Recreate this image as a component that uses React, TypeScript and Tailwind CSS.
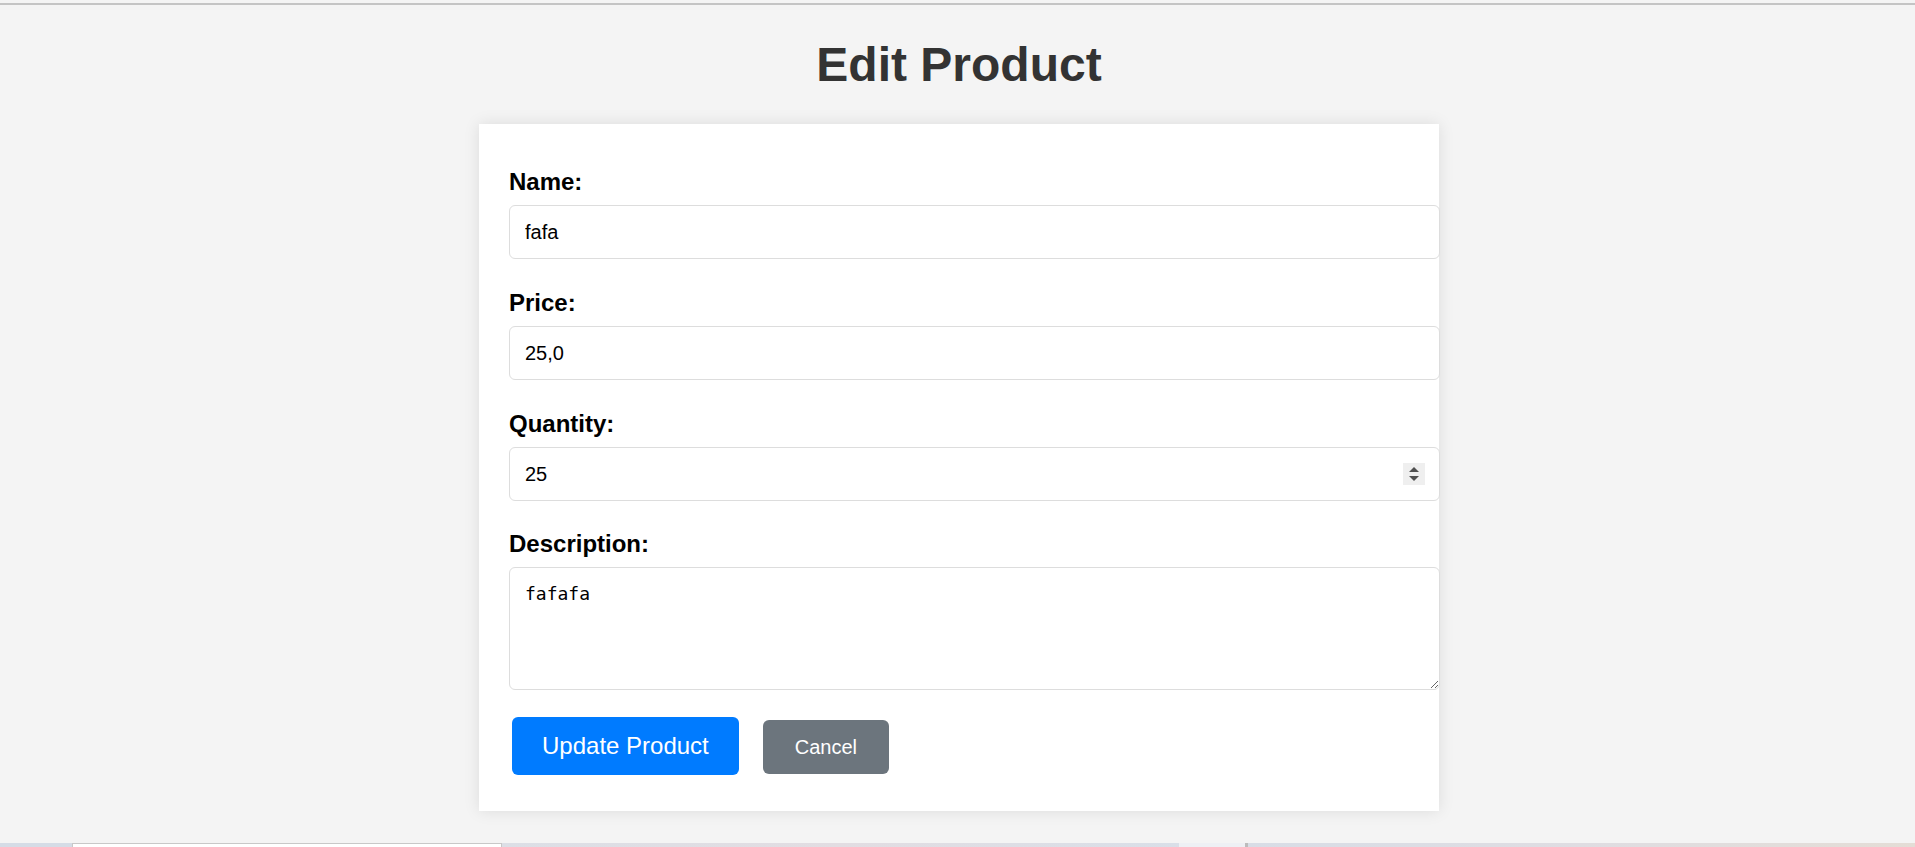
import { useState } from "react";

const fieldLabel = "block text-[24px] font-bold leading-[28px] text-black mb-[9px]";
const fieldInput =
  "block w-[calc(100%+1px)] h-[54px] rounded-[6px] border border-[#dddddd] bg-white px-[15px] text-[20px] leading-[23px] text-black outline-none";

function Spinner() {
  return (
    <svg className="pointer-events-none absolute right-[14px] top-[16px]" width="22" height="22" viewBox="0 0 22 22">
      <rect width="22" height="22" fill="#efefef" />
      <polygon points="6,9 16,9 11,4" fill="#505050" />
      <polygon points="6,13 16,13 11,18" fill="#505050" />
    </svg>
  );
}

export default function App() {
  const [name, setName] = useState("fafa");
  const [price, setPrice] = useState("25,0");
  const [quantity, setQuantity] = useState("25");
  const [description, setDescription] = useState("fafafa");

  return (
    <div className="flex min-h-screen flex-col bg-[#f4f4f4] font-['Liberation_Sans',Arial,sans-serif]">
      <div className="h-[3px] shrink-0" />
      <div className="h-[2px] shrink-0 bg-[#c4c4c4]" />

      <main className="flex flex-1 flex-col items-center pl-[3px]">
        <h1 className="mt-[32px] text-[48px] font-bold leading-[55px] text-[#333333]">Edit Product</h1>

        <form
          className="mt-[32px] w-[960px] bg-white pt-[44px] pb-[36px] pl-[30px] shadow-[0_0_15px_rgba(0,0,0,0.1)]"
          onSubmit={(e) => e.preventDefault()}
        >
          <div className="mb-[30px]">
            <label className={fieldLabel}>Name:</label>
            <input className={fieldInput} value={name} onChange={(e) => setName(e.target.value)} />
          </div>

          <div className="mb-[30px]">
            <label className={fieldLabel}>Price:</label>
            <input className={fieldInput} value={price} onChange={(e) => setPrice(e.target.value)} />
          </div>

          <div className="mb-[29px]">
            <label className={fieldLabel}>Quantity:</label>
            <div className="relative">
              <input className={fieldInput} value={quantity} onChange={(e) => setQuantity(e.target.value)} />
              <Spinner />
            </div>
          </div>

          <div>
            <label className={fieldLabel}>Description:</label>
            <textarea
              className="block h-[123px] w-[calc(100%+1px)] rounded-[6px] border border-[#dddddd] bg-white p-[15px] font-['DejaVu_Sans_Mono',monospace] text-[18px] leading-[21px] text-black outline-none"
              value={description}
              onChange={(e) => setDescription(e.target.value)}
            />
          </div>

          <div className="mt-[27px] flex items-baseline">
            <button
              type="submit"
              className="ml-[3px] rounded-[6px] bg-[#007bff] px-[30px] py-[15px] text-[24px] leading-[28px] text-white"
            >
              Update Product
            </button>
            <button
              type="button"
              className="ml-[24px] rounded-[6px] bg-[#6c757d] px-[32px] py-[15px] text-[20px] leading-[24px] text-white"
            >
              Cancel
            </button>
          </div>
        </form>
      </main>

      {/* strip of the window below, cut off at the bottom edge */}
      <div className="flex h-[4px] shrink-0">
        <div className="w-[72px] bg-[#d5dce6]" />
        <div className="w-[430px] border-t border-x border-[#c8c8c8] bg-white" />
        <div className="w-[677px] bg-gradient-to-r from-[#dcdfe6] via-[#e2dde2] to-[#d9dfe8]" />
        <div className="w-[66px] bg-[#eef0f4]" />
        <div className="w-[3px] bg-[#bcbcbc]" />
        <div className="flex-1 bg-gradient-to-r from-[#d8dde6] via-[#dfdde2] to-[#e4ddd6]" />
      </div>
    </div>
  );
}
